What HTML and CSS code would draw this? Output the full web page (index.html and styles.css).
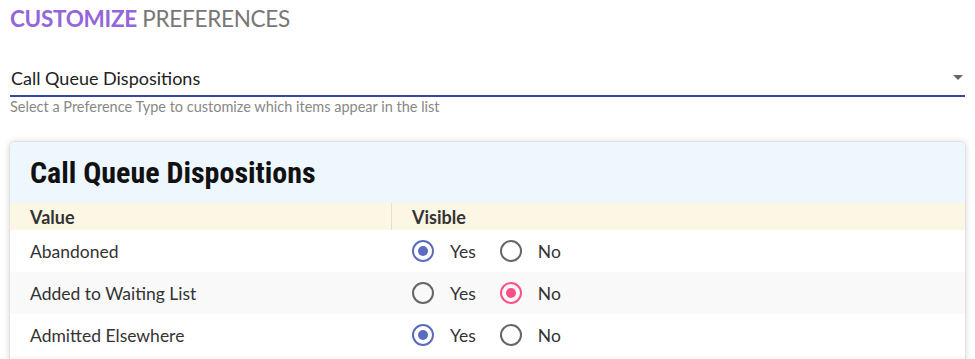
FILE: index.html
```html
<!DOCTYPE html>
<html lang="en">
<head>
    <meta charset="UTF-8">
    <meta name="viewport" content="width=device-width, initial-scale=1.0">
    <title>Customize Preferences</title>
    <link rel="stylesheet" href="styles.css">
</head>
<body>
    <h1 class="page-title"><span class="accent">CUSTOMIZE</span> PREFERENCES</h1>

    <div class="select-field">
        <div class="select-box">
            <span class="select-value">Call Queue Dispositions</span>
            <span class="select-arrow"></span>
        </div>
        <div class="helper">Select a Preference Type to customize which items appear in the list</div>
    </div>

    <div class="card">
        <div class="card-header">
            <h2>Call Queue Dispositions</h2>
        </div>
        <div class="row head">
            <div class="cell value-col">Value</div>
            <div class="cell">Visible</div>
        </div>
        <div class="row">
            <div class="cell value-col">Abandoned</div>
            <div class="cell">
                <label class="radio"><span class="dot checked"></span>Yes</label>
                <label class="radio"><span class="dot"></span>No</label>
            </div>
        </div>
        <div class="row alt">
            <div class="cell value-col">Added to Waiting List</div>
            <div class="cell">
                <label class="radio"><span class="dot"></span>Yes</label>
                <label class="radio"><span class="dot checked-no"></span>No</label>
            </div>
        </div>
        <div class="row">
            <div class="cell value-col">Admitted Elsewhere</div>
            <div class="cell">
                <label class="radio"><span class="dot checked"></span>Yes</label>
                <label class="radio"><span class="dot"></span>No</label>
            </div>
        </div>
        <div class="row alt">
            <div class="cell value-col"></div>
            <div class="cell"></div>
        </div>
    </div>
</body>
</html>
```

FILE: styles.css
```css
body {
    font-family: Lato, "Noto Sans", sans-serif;
    background-color: white;
    margin: 0;
    padding: 0 10px;
    color: #333;
}
.page-title {
    margin: 0;
    padding-top: 5px;
    font-size: 22.5px;
    font-weight: normal;
    color: #777;
    letter-spacing: -0.3px;
}
.page-title .accent {
    color: #9466d9;
    font-weight: bold;
}
.select-field {
    margin-top: 28px;
}
.select-box {
    display: flex;
    align-items: center;
    justify-content: space-between;
    height: 35px;
    border-bottom: 2px solid #3846a8;
}
.select-value {
    font-size: 18px;
    color: #222;
    padding-left: 1px;
}
.select-arrow {
    width: 0;
    height: 0;
    border-left: 5px solid transparent;
    border-right: 5px solid transparent;
    border-top: 5px solid #666;
    margin-right: 2px;
}
.helper {
    font-size: 14.5px;
    color: #888;
    margin-top: 1px;
}
.card {
    margin: 26px -1px 0 -1px;
    border: 1px solid #e0e0e0;
    border-radius: 6px;
    box-shadow: 0px 0px 6px rgba(0, 0, 0, 0.15);
    overflow: hidden;
}
.card-header {
    background-color: #eef6fe;
    height: 61px;
    display: flex;
    align-items: center;
    padding-left: 20px;
}
.card-header h2 {
    margin: 0;
    font-family: "Liberation Sans Narrow", "Roboto Condensed", Roboto, sans-serif;
    font-size: 30px;
    font-weight: bold;
    color: #111;
}
.row {
    display: grid;
    grid-template-columns: 382px 1fr;
    height: 42px;
    font-size: 17.5px;
}
.row.alt {
    background-color: #f9f9f9;
}
.row.head {
    height: 27px;
    background-color: #fcf6e5;
    font-weight: bold;
    font-size: 18px;
}
.row.head .value-col {
    border-right: 1px solid #e4dfd0;
}
.cell {
    display: flex;
    align-items: center;
    padding-left: 20px;
}
.radio {
    display: flex;
    align-items: center;
    margin-right: 24px;
}
.dot {
    box-sizing: border-box;
    width: 22px;
    height: 22px;
    border: 2px solid #666;
    border-radius: 50%;
    margin-right: 16px;
    position: relative;
}
.dot.checked {
    border-color: #5c6bc0;
}
.dot.checked::after, .dot.checked-no::after {
    content: "";
    position: absolute;
    left: 4px;
    top: 4px;
    width: 10px;
    height: 10px;
    border-radius: 50%;
    background-color: #5c6bc0;
}
.dot.checked-no {
    border-color: #ff4f86;
}
.dot.checked-no::after {
    background-color: #ff4f86;
}
```
